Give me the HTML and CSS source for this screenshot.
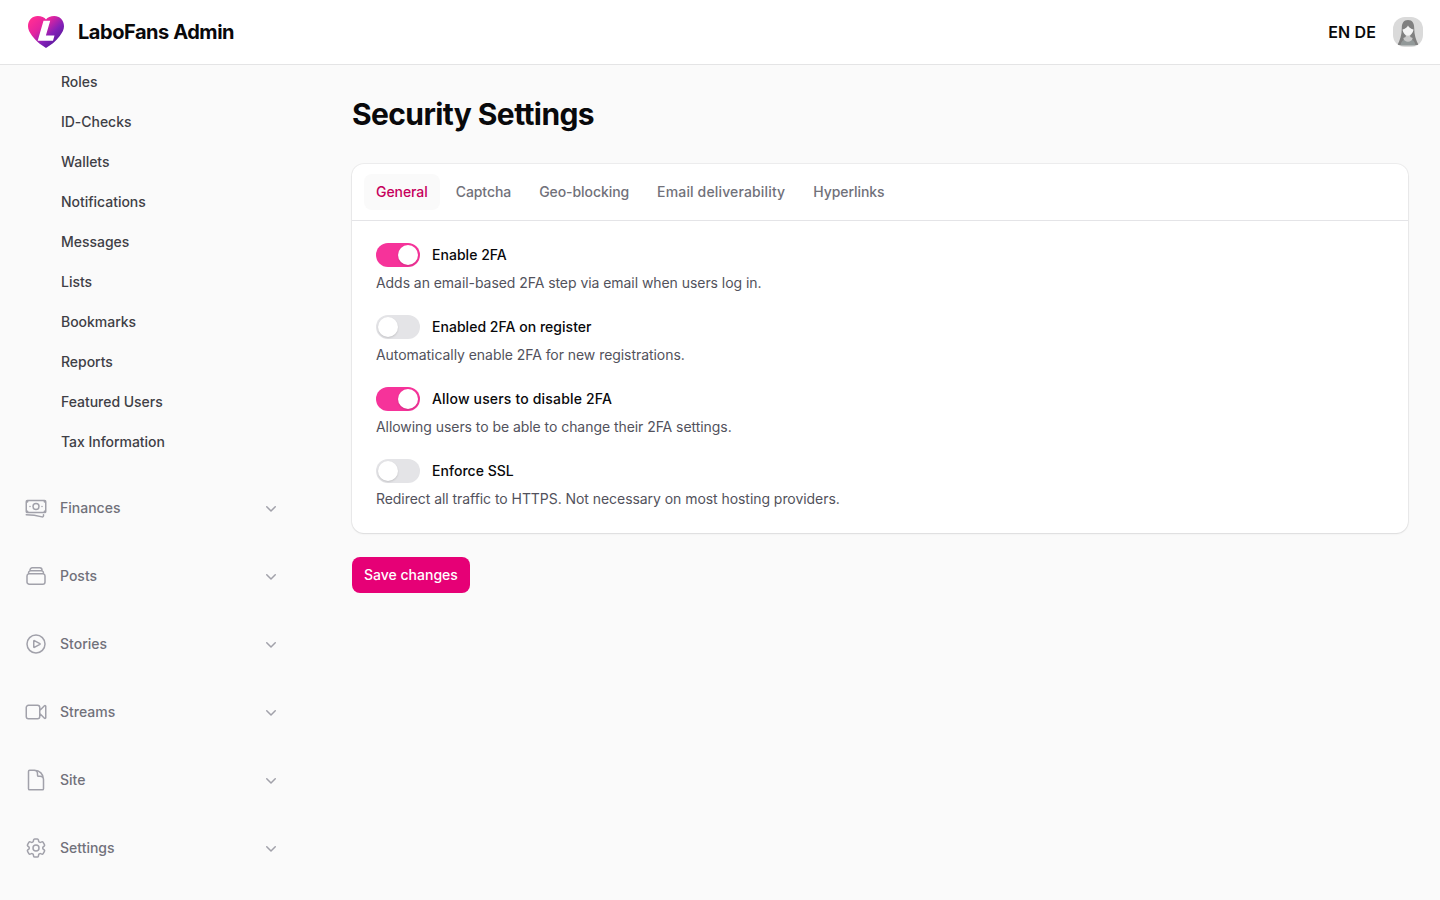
FILE: index.html
```html
<!DOCTYPE html>
<html lang="en">
<head>
	<meta charset="UTF-8">
	<title>Security Settings - LaboFans Admin</title>
	<link rel="stylesheet" href="styles.css">
</head>
<body>
	<header class="topbar">
		<a class="brand" href="#">
			<svg class="logo" viewBox="0 0 36 32">
				<defs>
					<linearGradient id="heart" x1="0.1" y1="0.1" x2="0.85" y2="0.8">
						<stop offset="0" stop-color="#ff2c94"/>
						<stop offset="0.35" stop-color="#e3249f"/>
						<stop offset="0.7" stop-color="#8420b8"/>
						<stop offset="1" stop-color="#5a1a9c"/>
					</linearGradient>
				</defs>
				<path fill="url(#heart)" d="M18 32C14 29.500 8 25.500 4.200 20C1.500 16.200 0 13.500 0 10.300C0 4 4.500 0 9.700 0C13.500 0 16.500 1.500 18 3.500C19.500 1.500 22.500 0 26.300 0C31.500 0 36 4 36 10.300C36 13.500 34.500 16.200 31.800 20C28 25.500 22 29.500 18 32Z"/>
				<path fill="#fff" d="M15.500 4.800H22.200L17.900 19.500H26.500L25 24.700H9.700Z"/>
			</svg>
			<span>LaboFans Admin</span>
		</a>
		<div class="topbar-end">
			<div class="langs"><a href="#">EN</a> <a href="#">DE</a></div>
			<svg class="avatar" viewBox="0 0 30 30">
				<rect width="30" height="30" fill="#dadada"/>
				<path fill="#808080" d="M15 3C10.500 3 8.800 6.500 8.800 11C8.800 18 7 23 4.500 28H25.500C23 23 21.200 18 21.200 11C21.200 6.500 19.500 3 15 3Z"/>
				<path fill="#929999" d="M7.500 28.500C8 24 10.500 22.800 13 22H17C19.500 22.800 22 24 22.500 28.500Z"/>
				<path fill="#c9c9c9" d="M12.700 17H17.300V20L19.700 21C19 26 11 26 10.300 21L12.700 20Z"/>
				<path fill="#f4f4f4" d="M9.500 12.500C12 12 14 10.500 15 8.500C16 10.500 18 12 20.500 12.500C20 16 17.500 18.700 15 18.700C12.500 18.700 10 16 9.500 12.500Z"/>
			</svg>
		</div>
	</header>
	<div class="layout">
		<nav class="sidebar">
			<ul class="items">
				<li><a href="#">Roles</a></li>
				<li><a href="#">ID-Checks</a></li>
				<li><a href="#">Wallets</a></li>
				<li><a href="#">Notifications</a></li>
				<li><a href="#">Messages</a></li>
				<li><a href="#">Lists</a></li>
				<li><a href="#">Bookmarks</a></li>
				<li><a href="#">Reports</a></li>
				<li><a href="#">Featured Users</a></li>
				<li><a href="#">Tax Information</a></li>
			</ul>
			<div class="group">
				<svg class="icon" viewBox="0 0 24 24"><path d="M2.25 18.75a60.07 60.07 0 0 1 15.797 2.101c.727.198 1.453-.342 1.453-1.096V18.75M3.75 4.5v.75A.75.75 0 0 1 3 6h-.75m0 0v-.375c0-.621.504-1.125 1.125-1.125H20.25M2.25 6v9m18-10.500v.75c0 .414.336.75.75.75h.75m-1.500-1.500h.375c.621 0 1.125.504 1.125 1.125v9.750c0 .621-.504 1.125-1.125 1.125h-.375m1.500-1.500H21a.75.75 0 0 0-.75.75v.75m0 0H3.750m0 0h-.375a1.125 1.125 0 0 1-1.125-1.125V15m1.500 1.500v-.75A.75.75 0 0 0 3 15h-.75M15 10.500a3 3 0 1 1-6 0 3 3 0 0 1 6 0Zm3 0h.008v.008H18V10.500Zm-12 0h.008v.008H6V10.500Z"/></svg>
				<span>Finances</span>
				<svg class="chevron" viewBox="0 0 20 20"><path d="M5.750 8.750L10 13l4.250-4.250"/></svg>
			</div>
			<div class="group">
				<svg class="icon" viewBox="0 0 24 24"><path d="M6 6.878V6a2.250 2.250 0 0 1 2.250-2.250h7.500A2.250 2.250 0 0 1 18 6v.878m-12 0c.235-.083.487-.128.750-.128h10.500c.263 0 .515.045.750.128m-12 0A2.250 2.250 0 0 0 4.500 9v.878m13.500-3A2.250 2.250 0 0 1 19.500 9v.878m0 0a2.246 2.246 0 0 0-.750-.128H5.250c-.263 0-.515.045-.750.128m15 0A2.250 2.250 0 0 1 21 12v6a2.250 2.250 0 0 1-2.250 2.250H5.250A2.250 2.250 0 0 1 3 18v-6c0-.980.626-1.813 1.500-2.122"/></svg>
				<span>Posts</span>
				<svg class="chevron" viewBox="0 0 20 20"><path d="M5.750 8.750L10 13l4.250-4.250"/></svg>
			</div>
			<div class="group">
				<svg class="icon" viewBox="0 0 24 24"><path d="M21 12a9 9 0 1 1-18 0 9 9 0 0 1 18 0Z"/><path d="M15.910 11.672a.375.375 0 0 1 0 .656l-5.603 3.113a.375.375 0 0 1-.557-.328V8.887c0-.286.307-.466.557-.327l5.603 3.112Z"/></svg>
				<span>Stories</span>
				<svg class="chevron" viewBox="0 0 20 20"><path d="M5.750 8.750L10 13l4.250-4.250"/></svg>
			</div>
			<div class="group">
				<svg class="icon" viewBox="0 0 24 24"><path d="m15.750 10.500 4.720-4.720a.75.75 0 0 1 1.280.53v11.380a.75.75 0 0 1-1.280.53l-4.720-4.720M4.500 18.750h9a2.250 2.250 0 0 0 2.250-2.250v-9a2.250 2.250 0 0 0-2.250-2.250h-9A2.250 2.250 0 0 0 2.250 7.500v9a2.250 2.250 0 0 0 2.250 2.250Z"/></svg>
				<span>Streams</span>
				<svg class="chevron" viewBox="0 0 20 20"><path d="M5.750 8.750L10 13l4.250-4.250"/></svg>
			</div>
			<div class="group">
				<svg class="icon" viewBox="0 0 24 24"><path d="M19.500 11.250a9 9 0 0 0-9-9H5.625c-.621 0-1.125.504-1.125 1.125v17.250c0 .621.504 1.125 1.125 1.125h12.750c.621 0 1.125-.504 1.125-1.125V11.625a3.375 3.375 0 0 0-3.375-3.375h-1.500A1.125 1.125 0 0 1 13.500 7.125v-1.500a3.375 3.375 0 0 0-3.375-3.375"/></svg>
				<span>Site</span>
				<svg class="chevron" viewBox="0 0 20 20"><path d="M5.750 8.750L10 13l4.250-4.250"/></svg>
			</div>
			<div class="group">
				<svg class="icon" viewBox="0 0 24 24"><path d="M9.594 3.940c.090-.542.560-.940 1.110-.940h2.593c.550 0 1.020.398 1.110.940l.213 1.281c.063.374.313.686.645.870.074.040.147.083.220.127.325.196.720.257 1.075.124l1.217-.456a1.125 1.125 0 0 1 1.370.490l1.296 2.247a1.125 1.125 0 0 1-.260 1.431l-1.003.827c-.293.241-.438.613-.430.992a7.723 7.723 0 0 1 0 .255c-.008.378.137.750.430.991l1.004.827c.424.350.534.955.260 1.430l-1.298 2.247a1.125 1.125 0 0 1-1.369.491l-1.217-.456c-.355-.133-.750-.072-1.076.124a6.470 6.470 0 0 1-.220.128c-.331.183-.581.495-.644.869l-.213 1.281c-.090.543-.560.940-1.110.940h-2.594c-.550 0-1.019-.398-1.110-.940l-.213-1.281c-.062-.374-.312-.686-.644-.870a6.520 6.520 0 0 1-.220-.127c-.325-.196-.720-.257-1.076-.124l-1.217.456a1.125 1.125 0 0 1-1.369-.490l-1.297-2.247a1.125 1.125 0 0 1 .260-1.431l1.004-.827c.292-.240.437-.613.430-.991a6.932 6.932 0 0 1 0-.255c.007-.380-.138-.751-.430-.992l-1.004-.827a1.125 1.125 0 0 1-.260-1.430l1.297-2.247a1.125 1.125 0 0 1 1.370-.491l1.216.456c.356.133.751.072 1.076-.124.072-.044.146-.086.220-.128.332-.183.582-.495.644-.869l.214-1.280Z"/><path d="M15 12a3 3 0 1 1-6 0 3 3 0 0 1 6 0Z"/></svg>
				<span>Settings</span>
				<svg class="chevron" viewBox="0 0 20 20"><path d="M5.750 8.750L10 13l4.250-4.250"/></svg>
			</div>
		</nav>
		<main class="main">
			<h1>Security Settings</h1>
			<div class="card">
				<div class="tabs">
					<a class="tab active" href="#">General</a>
					<a class="tab" href="#">Captcha</a>
					<a class="tab" href="#">Geo-blocking</a>
					<a class="tab wide" href="#">Email deliverability</a>
					<a class="tab" href="#">Hyperlinks</a>
				</div>
				<div class="fields">
					<div class="field">
						<label><span class="toggle on"></span>Enable 2FA</label>
						<p>Adds an email-based 2FA step via email when users log in.</p>
					</div>
					<div class="field">
						<label><span class="toggle"></span>Enabled 2FA on register</label>
						<p>Automatically enable 2FA for new registrations.</p>
					</div>
					<div class="field">
						<label class="wide"><span class="toggle on"></span>Allow users to disable 2FA</label>
						<p>Allowing users to be able to change their 2FA settings.</p>
					</div>
					<div class="field">
						<label><span class="toggle"></span>Enforce SSL</label>
						<p>Redirect all traffic to HTTPS. Not necessary on most hosting providers.</p>
					</div>
				</div>
			</div>
			<button class="save" type="button">Save changes</button>
		</main>
	</div>
</body>
</html>
```
FILE: styles.css
```css
*{
	box-sizing: border-box;
	margin: 0;
	padding: 0;
}
body{
	height: 900px;
	overflow: hidden;
	background: #fafafa;
	color: #09090b;
	font-family: Inter, "Liberation Sans", sans-serif;
	font-size: 14px;
	line-height: 20px;
}
a{
	color: inherit;
	text-decoration: none;
}
.topbar{
	height: 65px;
	padding: 0 17px 1px 28px;
	background: #fff;
	border-bottom: 1px solid #e4e4e5;
	display: flex;
	align-items: center;
	justify-content: space-between;
}
.brand{
	display: flex;
	align-items: center;
	gap: 14px;
	font-size: 20px;
	font-weight: 700;
	letter-spacing: -0.45px;
}
.logo{
	width: 36px;
	height: 32px;
}
.topbar-end{
	display: flex;
	align-items: center;
	gap: 17px;
}
.langs{
	font-size: 16px;
	font-weight: 600;
	letter-spacing: 0.15px;
}
.avatar{
	width: 30px;
	height: 30px;
	border-radius: 12px;
}
.layout{
	display: flex;
}
.sidebar{
	width: 320px;
	padding: 0 32px 0 24px;
	display: flex;
	flex-direction: column;
	gap: 28px;
}
.items{
	list-style: none;
	margin-top: -1px;
	display: flex;
	flex-direction: column;
	gap: 4px;
}
.items a{
	display: block;
	padding: 8px 0 8px 37px;
	font-weight: 500;
	letter-spacing: -0.03px;
	color: #3f3f46;
}
.group{
	height: 40px;
	padding-right: 7px;
	display: flex;
	align-items: center;
	font-weight: 500;
	color: #71717a;
}
.group span{
	flex: 1;
	padding-left: 12px;
}
.icon,.chevron{
	fill: none;
	stroke: #a1a1aa;
	stroke-width: 1.5;
	stroke-linecap: round;
	stroke-linejoin: round;
}
.icon{
	width: 24px;
	height: 24px;
}
.chevron{
	width: 20px;
	height: 20px;
}
.main{
	flex: 1;
	padding: 31px 32px;
}
h1{
	font-size: 30px;
	line-height: 36px;
	font-weight: 700;
	letter-spacing: -0.6px;
}
.card{
	margin: 32px 0 24px;
	background: #fff;
	border-radius: 12px;
	box-shadow: 0 0 0 1px rgba(9,9,11,0.05), 0 1px 2px rgba(0,0,0,0.08);
}
.tabs{
	display: flex;
	gap: 4px;
	padding: 10px 12px;
	border-bottom: 1px solid #e4e4e7;
}
.tab{
	padding: 8px 12px;
	border-radius: 8px;
	font-weight: 500;
	letter-spacing: -0.07px;
	color: #71717a;
}
.tab.wide{
	letter-spacing: 0.15px;
}
.tab.active{
	background: #fafafa;
	color: #c6005c;
}
.fields{
	padding: 22px 24px 24px;
	display: flex;
	flex-direction: column;
	gap: 22px;
}
.field label{
	display: flex;
	align-items: center;
	gap: 12px;
	height: 24px;
	font-weight: 500;
	letter-spacing: 0.03px;
}
.field label.wide{
	letter-spacing: 0.17px;
}
.field p{
	margin-top: 6px;
	letter-spacing: -0.055px;
	color: #52525c;
}
.toggle{
	width: 44px;
	height: 24px;
	padding: 2px;
	border-radius: 12px;
	background: #e4e4e7;
	display: flex;
}
.toggle::before{
	content: "";
	width: 20px;
	height: 20px;
	border-radius: 50%;
	background: #fff;
	box-shadow: 0 1px 2px rgba(0,0,0,0.15);
}
.toggle.on{
	background: #f6339a;
	justify-content: flex-end;
}
.save{
	padding: 8px 12px;
	border: 0;
	border-radius: 8px;
	background: #e60076;
	color: #fff;
	font: inherit;
	font-weight: 500;
}
```
